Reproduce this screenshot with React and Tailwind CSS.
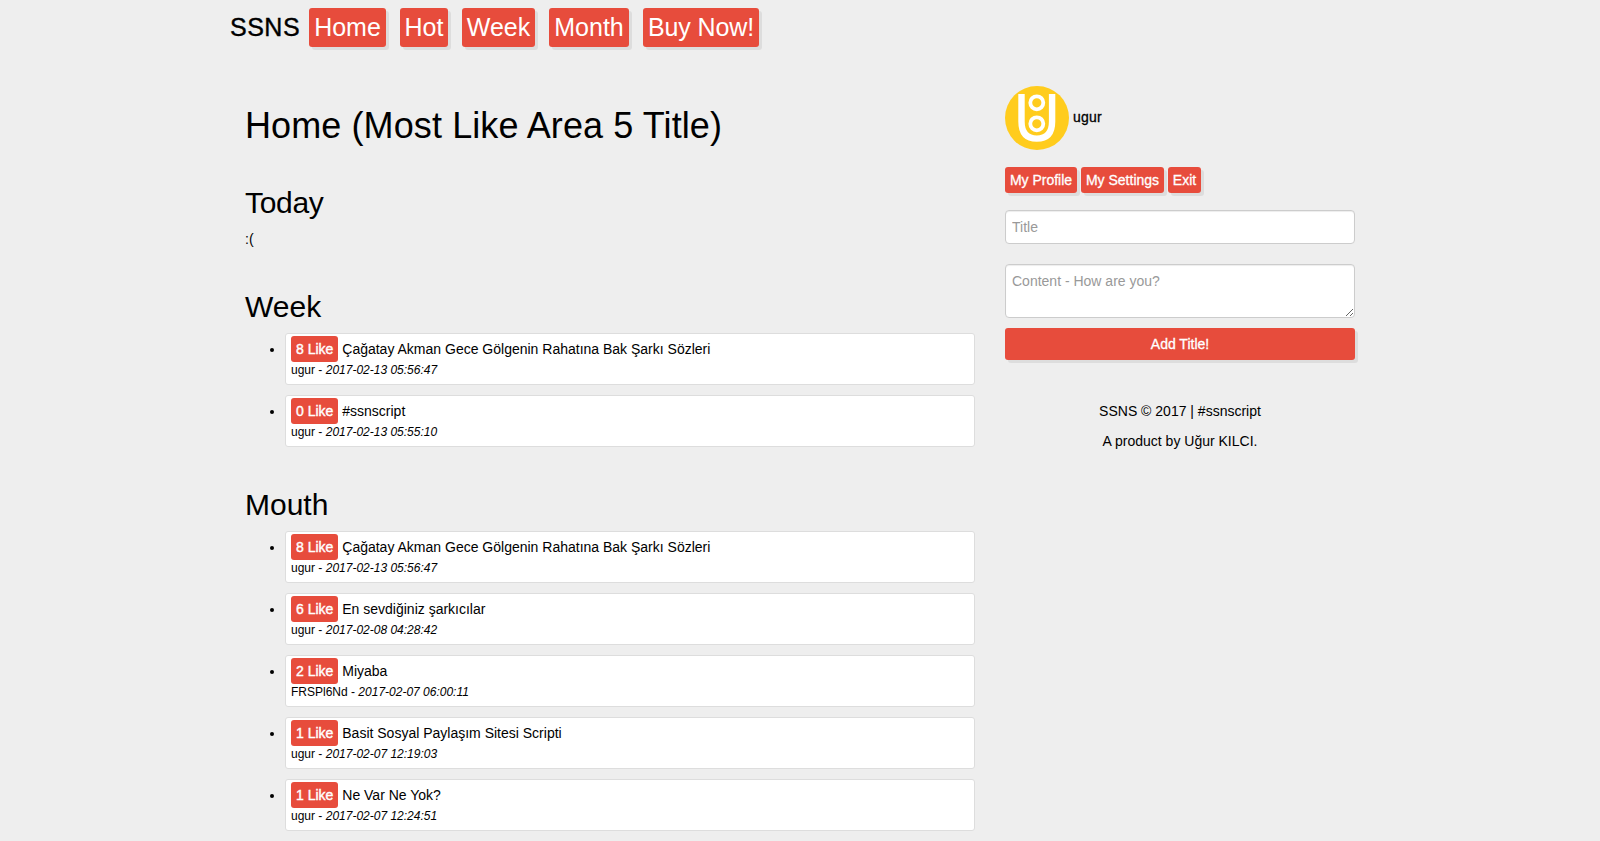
const nav = [
  { label: "Home", width: "w-[77px]" },
  { label: "Hot", width: "w-[48px]" },
  { label: "Week", width: "w-[73px]" },
  { label: "Month", width: "w-20" },
  { label: "Buy Now!", width: "w-[116px] tracking-[-0.1px]" },
];
const userLinks = [
  { label: "My Profile", width: "w-[72px]" },
  { label: "My Settings", width: "w-[83px]" },
  { label: "Exit", width: "w-[33px]" },
];

const song = {
  likes: 8,
  title: "Çağatay Akman Gece Gölgenin Rahatına Bak Şarkı Sözleri",
  user: "ugur",
  date: "2017-02-13 05:56:47",
};

const weekPosts = [
  song,
  { likes: 0, title: "#ssnscript", user: "ugur", date: "2017-02-13 05:55:10" },
];

const monthPosts = [
  song,
  { likes: 6, title: "En sevdiğiniz şarkıcılar", user: "ugur", date: "2017-02-08 04:28:42" },
  { likes: 2, title: "Miyaba", user: "FRSPl6Nd", date: "2017-02-07 06:00:11" },
  { likes: 1, title: "Basit Sosyal Paylaşım Sitesi Scripti", user: "ugur", date: "2017-02-07 12:19:03" },
  { likes: 1, title: "Ne Var Ne Yok?", user: "ugur", date: "2017-02-07 12:24:51" },
];

function PostList({ posts }) {
  return (
    <ul className="list-disc pl-10">
      {posts.map((post) => (
        <li key={post.title} className="mb-2.5 h-[52px] rounded-[3px] border border-[#ddd] bg-white p-[5px]">
          <a className="rounded-[3px] bg-[#e74c3c] p-[5px] text-white [-webkit-text-stroke:0.4px_white]">
            {post.likes} Like
          </a>{" "}
          <a>{post.title}</a>
          <br />
          <span className="text-[12px] leading-[16px]">
            {post.user} - <i>{post.date}</i>
          </span>
        </li>
      ))}
    </ul>
  );
}

function Avatar() {
  return (
    <svg width="64" height="64" viewBox="0 0 64 64" fill="none">
      <circle cx="32" cy="32" r="32" fill="#ffcc1d" />
      <path d="M16.5 8V35.5C16.5 47 21.5 52.6 31.8 52.6S47.1 47 47.1 35.5V8" stroke="#fff" strokeWidth="6.4" />
      <circle cx="31.8" cy="16.8" r="6.5" stroke="#fff" strokeWidth="3.8" />
      <circle cx="31.8" cy="37.8" r="6.5" stroke="#fff" strokeWidth="3.8" />
    </svg>
  );
}

export default function App() {
  return (
    <div className="h-[841px] overflow-hidden bg-[#eee] font-['Liberation_Sans',Arial,sans-serif] text-sm leading-5 text-black">
      <div className="mx-auto w-[1140px]">
        <header className="flex h-[86px] items-start pt-2 text-[25px] leading-[39px]">
          <span className="w-[79px] tracking-[0.5px] [-webkit-text-stroke:0.4px_black]">SSNS</span>
          <nav className="flex gap-3.5">
            {nav.map((item) => (
              <a
                key={item.label}
                className={`${item.width} flex h-[39px] justify-center whitespace-nowrap rounded-[3px] bg-[#e74c3c] text-white shadow-[3px_3px_0_#ddd]`}
              >
                {item.label}
              </a>
            ))}
          </nav>
        </header>
        <div className="flex">
          <main className="w-[760px] px-[15px] pt-5">
            <h1 className="text-[36px] leading-10 tracking-[0.1px]">Home (Most Like Area 5 Title)</h1>
            <h2 className="mt-10 mb-2.5 text-[30px] leading-[33px] tracking-[-0.3px]">Today</h2>
            <p>:(</p>
            <h2 className="mt-[41px] mb-2.5 text-[30px] leading-[33px]">Week</h2>
            <PostList posts={weekPosts} />
            <h2 className="mt-[41px] mb-2.5 text-[30px] leading-[33px]">Mouth</h2>
            <PostList posts={monthPosts} />
          </main>
          <aside className="w-[380px] px-[15px]">
            <div className="flex items-center gap-1">
              <Avatar />
              <span className="pb-0.5 tracking-[0.2px] [-webkit-text-stroke:0.3px_black]">ugur</span>
            </div>
            <div className="mt-[17px] flex gap-1">
              {userLinks.map((item) => (
                <a
                  key={item.label}
                  className={`${item.width} flex justify-center whitespace-nowrap rounded-[3px] bg-[#e74c3c] py-[3px] text-white shadow-[3px_3px_0_#ddd] [-webkit-text-stroke:0.3px_white]`}
                >
                  {item.label}
                </a>
              ))}
            </div>
            <input
              placeholder="Title"
              className="mt-[17px] block h-[34px] w-full rounded border border-[#ccc] bg-white px-1.5 shadow-[inset_0_1px_1px_rgba(0,0,0,0.075)] placeholder:text-[#999]"
            />
            <textarea
              rows={2}
              placeholder="Content - How are you?"
              className="mt-5 block h-[54px] w-full rounded border border-[#ccc] bg-white p-1.5 shadow-[inset_0_1px_1px_rgba(0,0,0,0.075)] placeholder:text-[#999]"
            />
            <button className="mt-2.5 block h-8 w-full rounded-[3px] bg-[#e74c3c] text-white shadow-[3px_3px_0_#ddd] [-webkit-text-stroke:0.3px_white]">
              Add Title!
            </button>
            <footer className="mt-[41px] text-center">
              <p className="mb-2.5">SSNS © 2017 | #ssnscript</p>
              <p>A product by Uğur KILCI.</p>
            </footer>
          </aside>
        </div>
      </div>
    </div>
  );
}
